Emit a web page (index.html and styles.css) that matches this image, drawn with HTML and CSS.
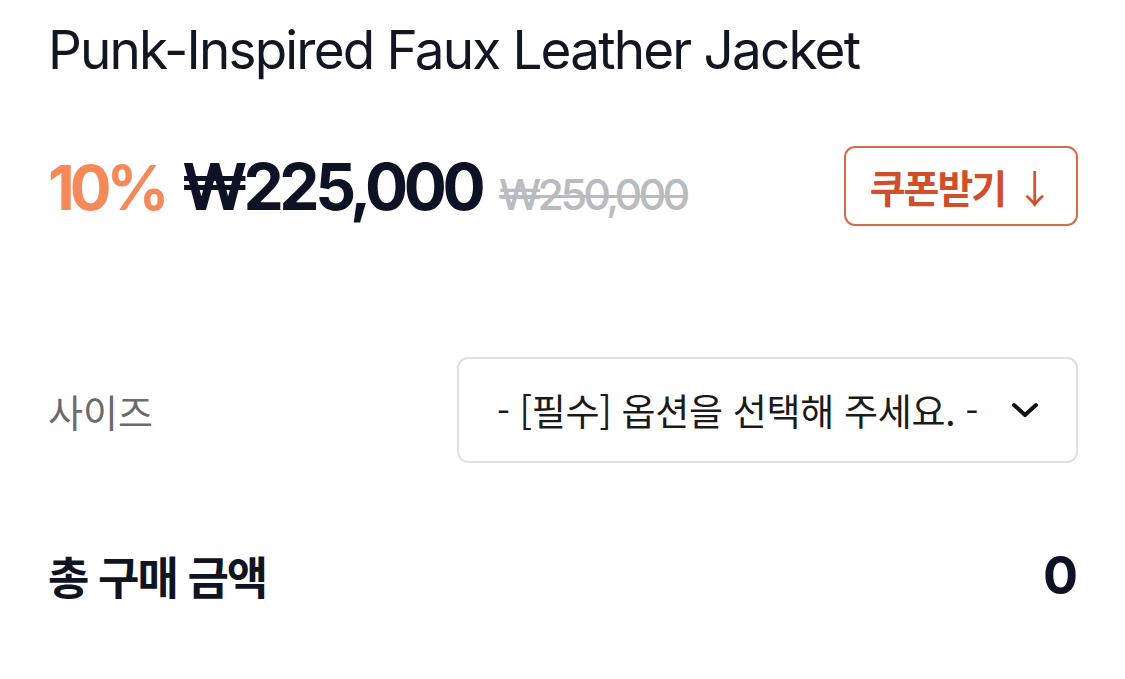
FILE: index.html
```html
<!DOCTYPE html>
<html lang="ko">
<head>
<meta charset="utf-8">
<link rel="stylesheet" href="styles.css">
</head>
<body>
<main class="product">
  <h1 class="title">Punk-Inspired Faux Leather Jacket</h1>
  <div class="price-row">
    <div class="prices">
      <span class="discount">10%</span>
      <span class="price">₩225,000</span>
      <span class="original">₩250,000</span>
    </div>
    <button class="coupon">쿠폰받기 <span class="arrow">↓</span></button>
  </div>
  <div class="option-row">
    <span class="option-label">사이즈</span>
    <div class="select">
      <span class="select-text">- [필수] 옵션을 선택해 주세요. -</span>
      <svg class="chevron" width="30" height="20" viewBox="0 0 30 20"><path d="M4 5 L15 15 L26 5" fill="none" stroke="#111" stroke-width="4" stroke-linecap="round" stroke-linejoin="round"/></svg>
    </div>
  </div>
  <div class="total-row">
    <span class="total-label">총 구매 금액</span>
    <span class="total-value">0</span>
  </div>
</main>
</body>
</html>
```
FILE: styles.css
```css
* { box-sizing: border-box; }
html, body { margin: 0; padding: 0; background: #fff; }
body {
  font-family: Inter, "Noto Sans CJK KR", sans-serif;
  color: #0f1524;
}
.product {
  width: 1125px;
  height: 679px;
  padding: 0 47px 0 48px;
  overflow: hidden;
}
.title {
  margin: 0;
  padding-top: 20px;
  font-size: 53px;
  font-weight: 400;
  line-height: 60px;
  letter-spacing: -1.8px;
  color: #121522;
}
.price-row {
  margin-top: 66px;
  display: flex;
  justify-content: space-between;
  align-items: center;
  height: 80px;
}
.prices {
  display: flex;
  align-items: baseline;
}
.discount {
  font-size: 62px;
  font-weight: 700;
  color: #f5895a;
  letter-spacing: -5px;
  margin-right: 17px;
}
.price {
  font-size: 64px;
  font-weight: 700;
  color: #0d1324;
  letter-spacing: -4.5px;
  margin-right: 18px;
}
.original {
  font-size: 43px;
  font-weight: 500;
  color: #b9bbbf;
  text-decoration: line-through;
  text-decoration-thickness: 3px;
  letter-spacing: -3.7px;
}
.coupon {
  width: 234px;
  height: 80px;
  border: 2px solid #d66a4b;
  border-radius: 11px;
  background: #fff;
  color: #cf4f2c;
  font-family: "Noto Sans CJK KR", sans-serif;
  font-size: 39px;
  font-weight: 700;
  letter-spacing: -2px;
  display: flex;
  align-items: center;
  justify-content: center;
  gap: 10px;
  padding: 0;
}
.arrow { font-weight: 400; }
.option-row {
  margin-top: 131px;
  display: flex;
  justify-content: space-between;
  align-items: center;
}
.option-label {
  font-family: "Noto Sans CJK KR", sans-serif;
  font-size: 38px;
  color: #6b6b6b;
}
.select {
  width: 621px;
  height: 106px;
  border: 2px solid #dedfe1;
  border-radius: 11px;
  display: flex;
  align-items: center;
  justify-content: flex-end;
  padding-right: 36px;
  gap: 32px;
}
.select-text {
  font-family: "Noto Sans CJK KR", sans-serif;
  font-size: 37px;
  letter-spacing: -0.3px;
  color: #1a1a1a;
}
.chevron { display: block; }
.total-row {
  margin-top: 80px;
  display: flex;
  justify-content: space-between;
  align-items: center;
}
.total-label {
  font-family: "Noto Sans CJK KR", sans-serif;
  font-size: 45px;
  font-weight: 700;
  letter-spacing: -2px;
  color: #0f1420;
}
.total-value {
  font-size: 52px;
  font-weight: 700;
  color: #0d1324;
}
```
